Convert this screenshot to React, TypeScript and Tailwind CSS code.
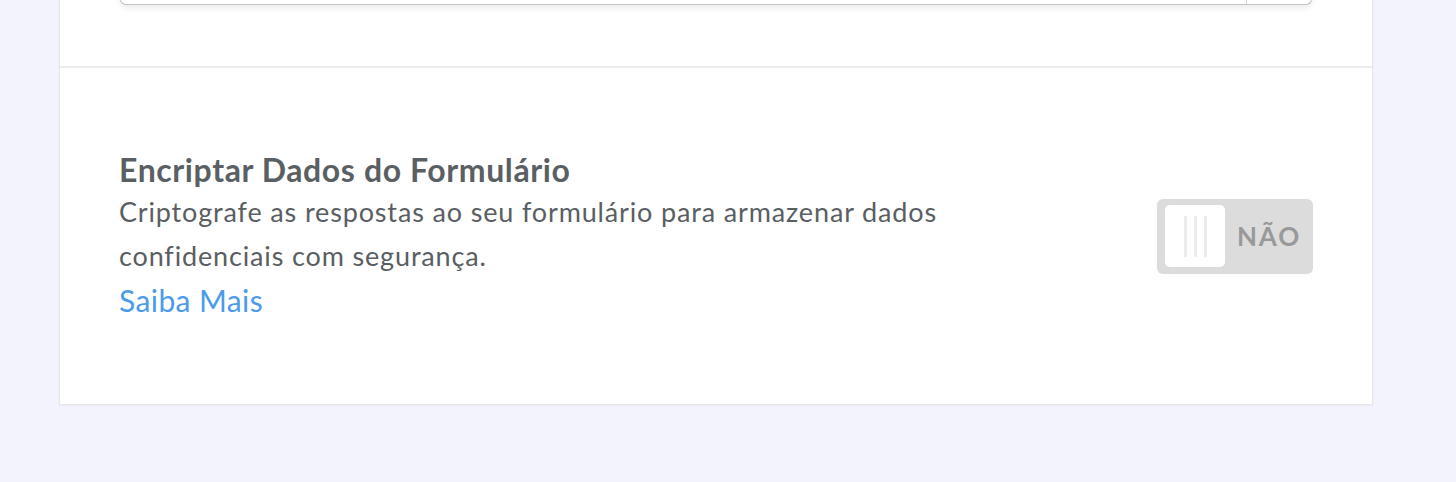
export default function App() {
  return (
    <div className="min-h-[482px] bg-[#f3f3fe] overflow-hidden" style={{ fontFamily: 'Lato, "Noto Sans", sans-serif' }}>
      <div className="ml-[59px] w-[1314px] bg-white border-x border-b border-[#e6e6e6] shadow-[0_1px_2px_rgba(0,0,0,0.04)]">
        {/* previous field, cut off at top */}
        <div className="flex flex-col h-[68px] border-b-2 border-[#ebebeb] px-[60px]">
          <div className="-mt-[43px] h-[48px] flex rounded-[6px] border border-[#c4c4c4] border-t-0 bg-white shadow-[0_3px_6px_rgba(0,0,0,0.08)]">
            <div className="flex-1" />
            <div className="w-[65px] border-l border-[#d6d6d6]" />
          </div>
        </div>

        {/* encrypt setting */}
        <div className="flex items-center justify-between pl-[59px] pr-[59px] py-[82px]">
          <div className="text-[#595e63]">
            <h3 className="text-[32px] leading-[40px] font-bold tracking-[0.6px] text-[#5a5f64]">Encriptar Dados do Formulário</h3>
            <p className="text-[27px] leading-[44px] tracking-[0.85px] max-w-[860px]">
              Criptografe as respostas ao seu formulário para armazenar dados confidenciais com segurança.
            </p>
            <a href="#" className="block text-[30px] leading-[44px] tracking-[0.4px] text-[#4a9beb]">Saiba Mais</a>
          </div>

          <button className="flex items-center w-[156px] h-[75px] rounded-[6px] bg-[#dcdcdc] pl-[8px] shrink-0">
            <span className="flex items-center justify-center gap-[7px] w-[60px] h-[62px] rounded-[5px] bg-white">
              <span className="w-[3px] h-[41px] bg-[#ececec]" />
              <span className="w-[3px] h-[41px] bg-[#ececec]" />
              <span className="w-[3px] h-[41px] bg-[#ececec]" />
            </span>
            <span className="ml-[12px] text-[26px] font-bold tracking-[1.8px] text-[#999999]">NÃO</span>
          </button>
        </div>
      </div>
    </div>
  )
}
